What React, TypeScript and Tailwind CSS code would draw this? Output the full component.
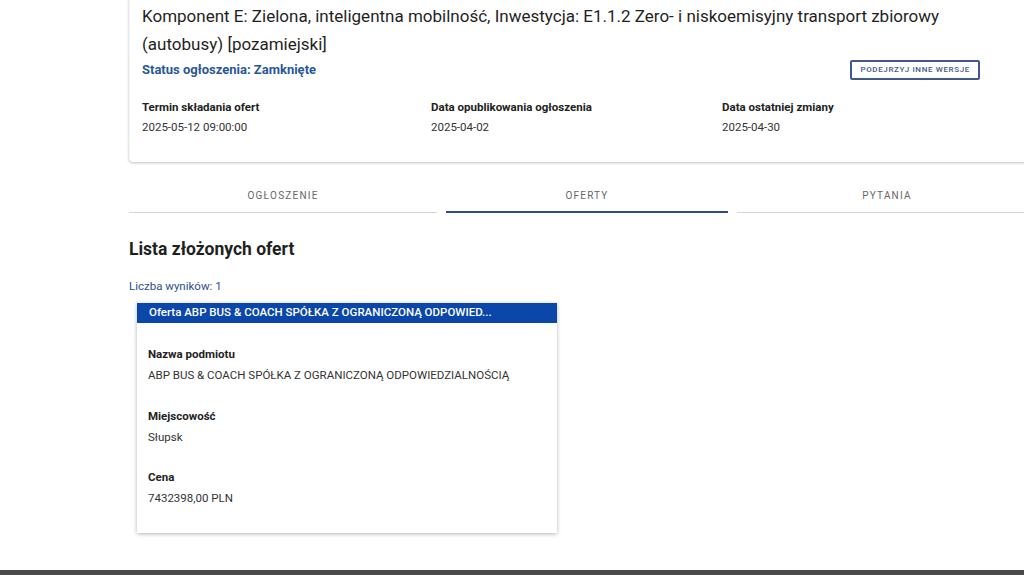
import React from "react";

const font = { fontFamily: "Roboto, 'Liberation Sans', sans-serif" };

const meta = [
  { label: "Termin składania ofert", value: "2025-05-12 09:00:00" },
  { label: "Data opublikowania ogłoszenia", value: "2025-04-02" },
  { label: "Data ostatniej zmiany", value: "2025-04-30" },
];

const fields = [
  { label: "Nazwa podmiotu", value: "ABP BUS & COACH SPÓŁKA Z OGRANICZONĄ ODPOWIEDZIALNOŚCIĄ" },
  { label: "Miejscowość", value: "Słupsk" },
  { label: "Cena", value: "7432398,00 PLN" },
];

const tabs = [
  { t: "OGŁOSZENIE", w: "w-[308px]", active: false },
  { t: "OFERTY", w: "w-[282px]", active: true },
  { t: "PYTANIA", w: "w-[300px]", active: false },
];

const App = () => {
  return (
    <div className="w-[1024px] h-[575px] overflow-hidden bg-white flex flex-col" style={font}>
      <div className="flex-1 pl-[129px]">
        {/* Announcement card */}
        <div className="w-[920px] -mt-[10px] bg-white rounded shadow-[0_1px_3px_rgba(0,0,0,0.25)] border-l border-gray-100 pl-[12px] pr-[20px] pt-[12px] pb-[27px]">
          <h1 className="w-[840px] text-[17px] leading-[28px] text-[#1f1f1f]">
            Komponent E: Zielona, inteligentna mobilność, Inwestycja: E1.1.2 Zero- i niskoemisyjny transport zbiorowy (autobusy) [pozamiejski]
          </h1>
          <div className="flex items-center justify-between mt-[2px] h-[20px]">
            <span className="text-[13px] font-bold text-[#2b5797]">Status ogłoszenia: Zamknięte</span>
            <button className="mr-[49px] border-2 border-[#3f5a8a] rounded-[2px] px-[8px] h-[20px] text-[8px] tracking-[0.08em] text-[#3f5a8a] font-medium">
              PODEJRZYJ INNE WERSJE
            </button>
          </div>
          <div className="grid grid-cols-[289px_291px_1fr] mt-[19px]">
            {meta.map((m) => (
              <div key={m.label}>
                <div className="text-[11.5px] font-bold text-[#222] leading-[16px]">{m.label}</div>
                <div className="text-[11.5px] text-[#333] mt-[4px] leading-[16px]">{m.value}</div>
              </div>
            ))}
          </div>
        </div>

        {/* Tabs */}
        <div className="flex gap-[9px] mt-[17px]">
          {tabs.map((tab) => (
            <div
              key={tab.t}
              className={`${tab.w} shrink-0 h-[34px] flex items-center justify-center text-[10px] tracking-[0.12em] text-[#666] ${
                tab.active ? "border-b-2 border-[#2c4a8c]" : "border-b border-[#d6d6d6]"
              }`}
            >
              {tab.t}
            </div>
          ))}
        </div>

        {/* Offers list */}
        <h2 className="text-[17.5px] font-bold text-[#1f1f1f] mt-[24px] leading-[24px]">Lista złożonych ofert</h2>
        <div className="text-[11.5px] text-[#2d4f8a] mt-[17px] leading-[16px]">Liczba wyników: 1</div>
        <div className="ml-[8px] mt-[9px] w-[420px] bg-white shadow-[0_1px_4px_rgba(0,0,0,0.3)]">
          <div className="bg-[#0b47a8] h-[20px] px-[12px] flex items-center text-white text-[11.5px] font-medium">
            Oferta ABP BUS &amp; COACH SPÓŁKA Z OGRANICZONĄ ODPOWIED...
          </div>
          <div className="px-[11px] pt-[23px] pb-[27px] flex flex-col gap-[24.5px]">
            {fields.map((f) => (
              <div key={f.label}>
                <div className="text-[11.5px] font-bold text-[#222] leading-[16px]">{f.label}</div>
                <div className="text-[11.5px] text-[#333] mt-[5px] leading-[16px]">{f.value}</div>
              </div>
            ))}
          </div>
        </div>
      </div>
      <div className="h-[5px] bg-[#4a4a4a]" />
    </div>
  );
};

export default App;
